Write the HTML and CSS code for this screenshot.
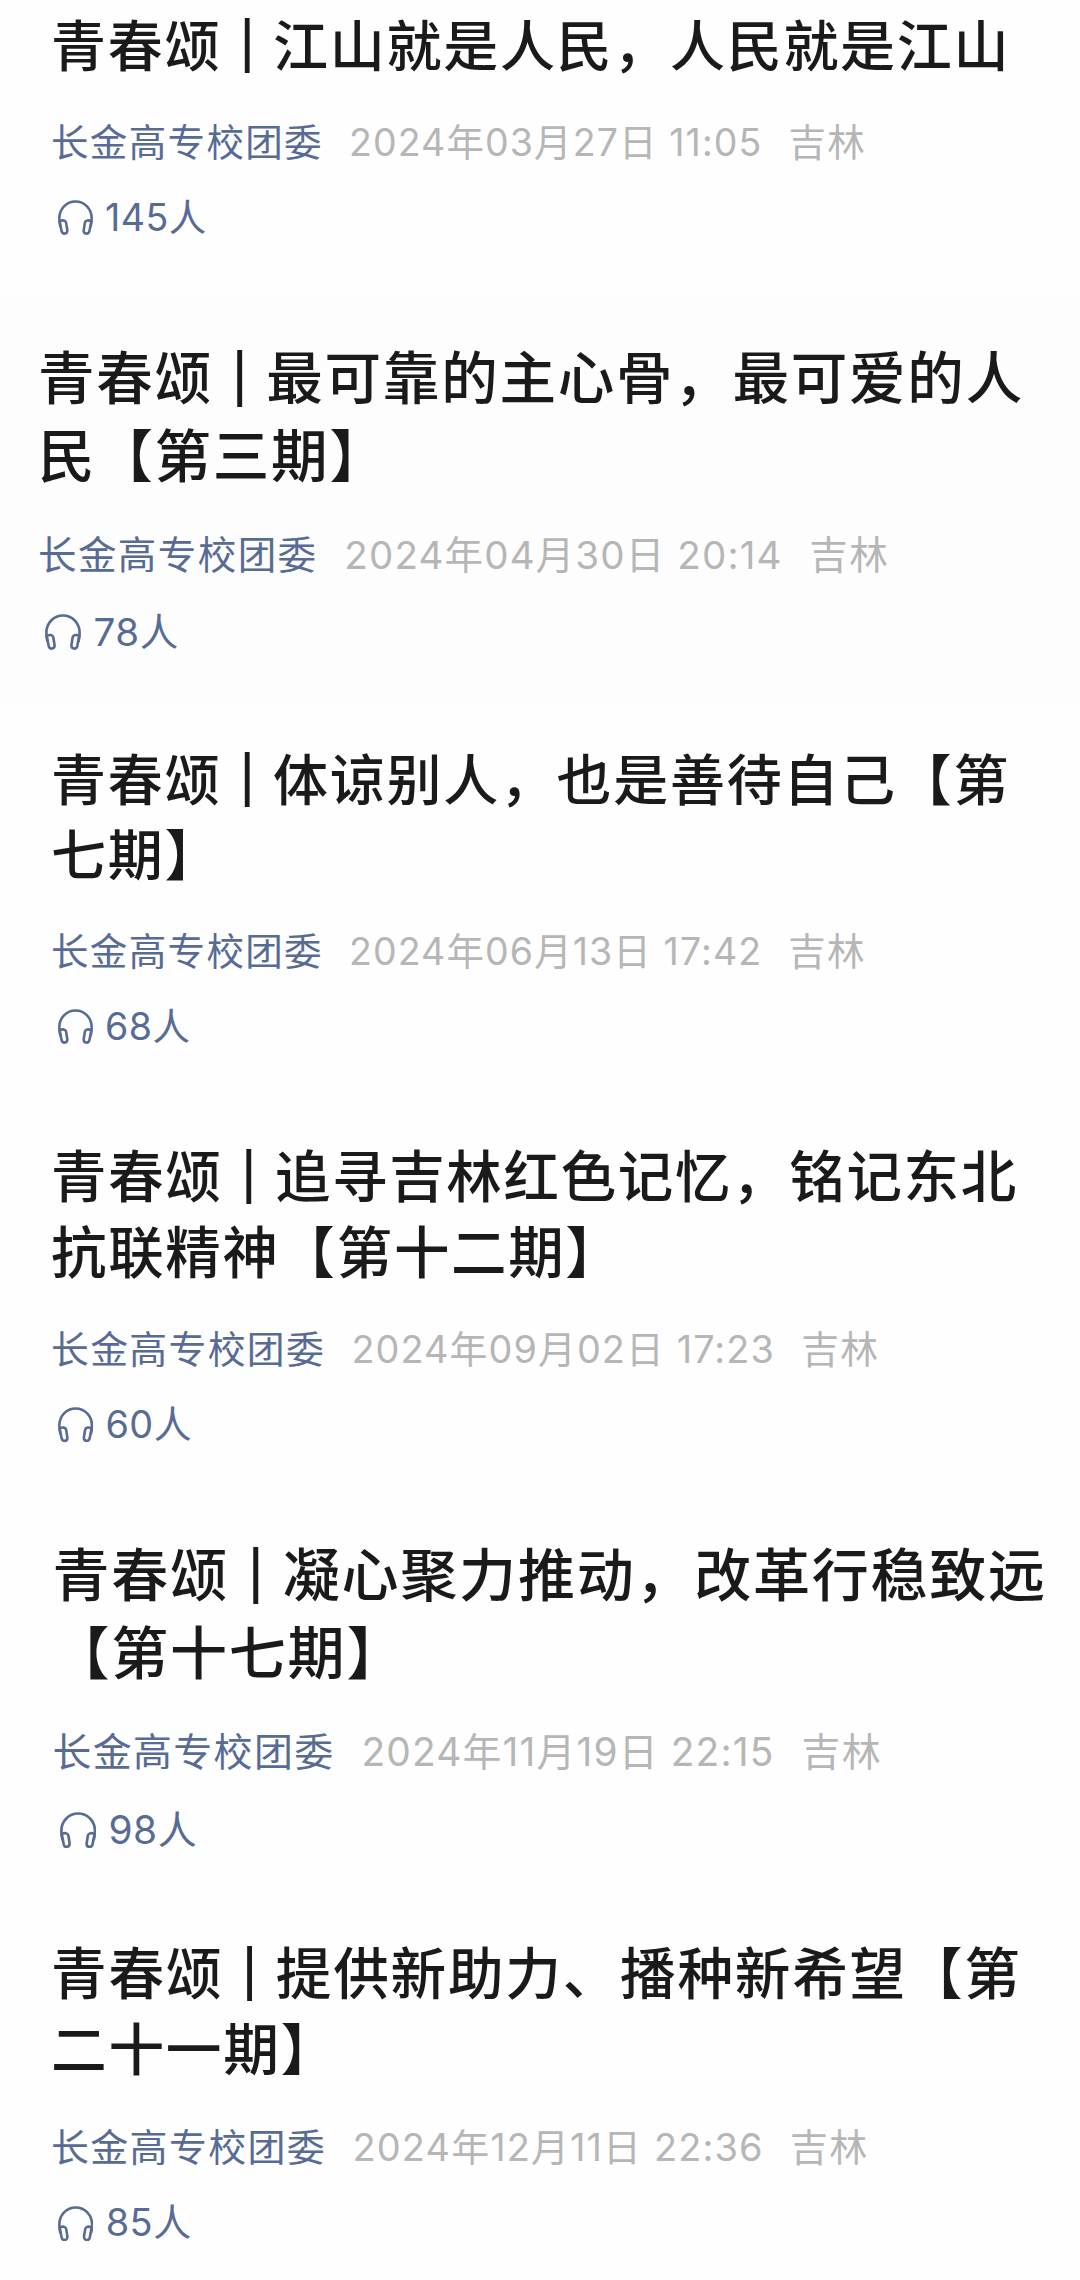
FILE: index.html
```html
<!DOCTYPE html>
<html lang="zh-CN">
<head>
<meta charset="utf-8">
<title>青春颂</title>
<link rel="stylesheet" href="styles.css">
</head>
<body>
<svg class="defs" width="0" height="0" aria-hidden="true">
  <symbol id="headphones" viewBox="0 0 34 34">
    <g fill="none" stroke="currentColor" stroke-width="2.5" stroke-linecap="round" stroke-linejoin="round">
      <path d="M2.200 25.500C1.600 23 1.300 20.300 1.300 17.600 1.300 8.600 8.200 1.400 17 1.400S32.700 8.600 32.700 17.600C32.700 20.300 32.400 23 31.800 25.500"/>
      <path d="M1.600 20.800C4.300 19.200 7.400 19.500 7.900 22.200L9 29.200C9.400 33.400 4.500 33.800 3.500 30.300Z"/>
      <path d="M32.400 20.800C29.700 19.200 26.600 19.500 26.100 22.200L25 29.200C24.600 33.400 29.500 33.800 30.500 30.300Z"/>
    </g>
  </symbol>
</svg>
<main class="list">
  <article class="post post-1">
    <h2 class="title">青春颂<span class="bar">|</span>江山就是人民，人民就是江山</h2>
    <div class="meta"><span class="author">长金高专校团委</span><span class="date">2024年03月27日 11:05</span><span class="place">吉林</span></div>
    <div class="listen"><svg class="icon"><use href="#headphones"/></svg><span>145人</span></div>
  </article>
  <article class="post post-2">
    <h2 class="title">青春颂<span class="bar">|</span>最可靠的主心骨，最可爱的人<br>民【第三期】</h2>
    <div class="meta"><span class="author">长金高专校团委</span><span class="date">2024年04月30日 20:14</span><span class="place">吉林</span></div>
    <div class="listen"><svg class="icon"><use href="#headphones"/></svg><span>78人</span></div>
  </article>
  <article class="post post-3">
    <h2 class="title">青春颂<span class="bar">|</span>体谅别人，也是善待自己【第<br>七期】</h2>
    <div class="meta"><span class="author">长金高专校团委</span><span class="date">2024年06月13日 17:42</span><span class="place">吉林</span></div>
    <div class="listen"><svg class="icon"><use href="#headphones"/></svg><span>68人</span></div>
  </article>
  <article class="post post-4">
    <h2 class="title">青春颂<span class="bar">|</span>追寻吉林红色记忆，铭记东北<br>抗联精神【第十二期】</h2>
    <div class="meta"><span class="author">长金高专校团委</span><span class="date">2024年09月02日 17:23</span><span class="place">吉林</span></div>
    <div class="listen"><svg class="icon"><use href="#headphones"/></svg><span>60人</span></div>
  </article>
  <article class="post post-5">
    <h2 class="title">青春颂<span class="bar">|</span>凝心聚力推动，改革行稳致远<br>【第十七期】</h2>
    <div class="meta"><span class="author">长金高专校团委</span><span class="date">2024年11月19日 22:15</span><span class="place">吉林</span></div>
    <div class="listen"><svg class="icon"><use href="#headphones"/></svg><span>98人</span></div>
  </article>
  <article class="post post-6">
    <h2 class="title">青春颂<span class="bar">|</span>提供新助力、播种新希望【第<br>二十一期】</h2>
    <div class="meta"><span class="author">长金高专校团委</span><span class="date">2024年12月11日 22:36</span><span class="place">吉林</span></div>
    <div class="listen"><svg class="icon"><use href="#headphones"/></svg><span>85人</span></div>
  </article>
</main>
</body>
</html>
```
FILE: styles.css
```css
* {
  box-sizing: border-box;
}

body {
  margin: 0;
  background: #fefefe;
  font-family: Inter, "Noto Sans CJK SC", sans-serif;
}

.defs {
  display: block;
}

.list {
  display: flex;
  flex-direction: column;
  height: 2280px;
  overflow: hidden;
}

/* --u is one design pixel of a post; each post has its own zoom */
.post {
  --u: calc(1px * var(--zoom));
  flex: none;
  padding-left: 51px;
  white-space: nowrap;
}

.post-1 { --zoom: 1; height: 295px; padding-top: 5px; }
.post-2 { --zoom: 1.028; height: 407px; padding-top: 41px; padding-left: 38px; background: #fdfdfd; }
.post-3 { --zoom: 1; height: 398px; padding-top: 37px; }
.post-4 { --zoom: 1.008; height: 400px; padding-top: 35px; }
.post-5 { --zoom: 1.037; height: 400px; padding-top: 32px; padding-left: 52.5px; }
.post-6 { --zoom: 1.012; height: 380px; padding-top: 32px; }

.title {
  margin: 0;
  font-family: "Noto Sans CJK SC", sans-serif;
  font-size: calc(55 * var(--u));
  font-weight: 500;
  line-height: calc(75.400 * var(--u));
  letter-spacing: calc(1.700 * var(--u));
  color: #1a1a1a;
  text-spacing-trim: space-all;
}

.bar {
  display: inline-block;
  width: calc(52 * var(--u));
  text-align: center;
  letter-spacing: 0;
  font-family: "Liberation Sans", sans-serif;
  font-size: 1.080em;
  line-height: 0;
  vertical-align: 0.080em;
}

.meta {
  display: flex;
  align-items: center;
  height: calc(60 * var(--u));
  margin-top: calc(32 * var(--u));
  font-size: calc(37.500 * var(--u));
  line-height: 1.200;
  letter-spacing: calc(1.350 * var(--u));
  color: #b6b6b6;
}

.author {
  width: calc(298 * var(--u));
  color: #576b95;
}

.date {
  letter-spacing: calc(1.100 * var(--u));
}

.place {
  margin-left: calc(26 * var(--u));
}

.listen {
  display: flex;
  align-items: center;
  gap: calc(12 * var(--u));
  height: calc(60 * var(--u));
  margin-top: calc(15 * var(--u));
  padding-left: calc(7 * var(--u));
  font-size: calc(37.500 * var(--u));
  line-height: 1.200;
  letter-spacing: calc(0.500 * var(--u));
  color: #576b95;
}

.icon {
  width: calc(35 * var(--u));
  height: calc(35 * var(--u));
}
```
